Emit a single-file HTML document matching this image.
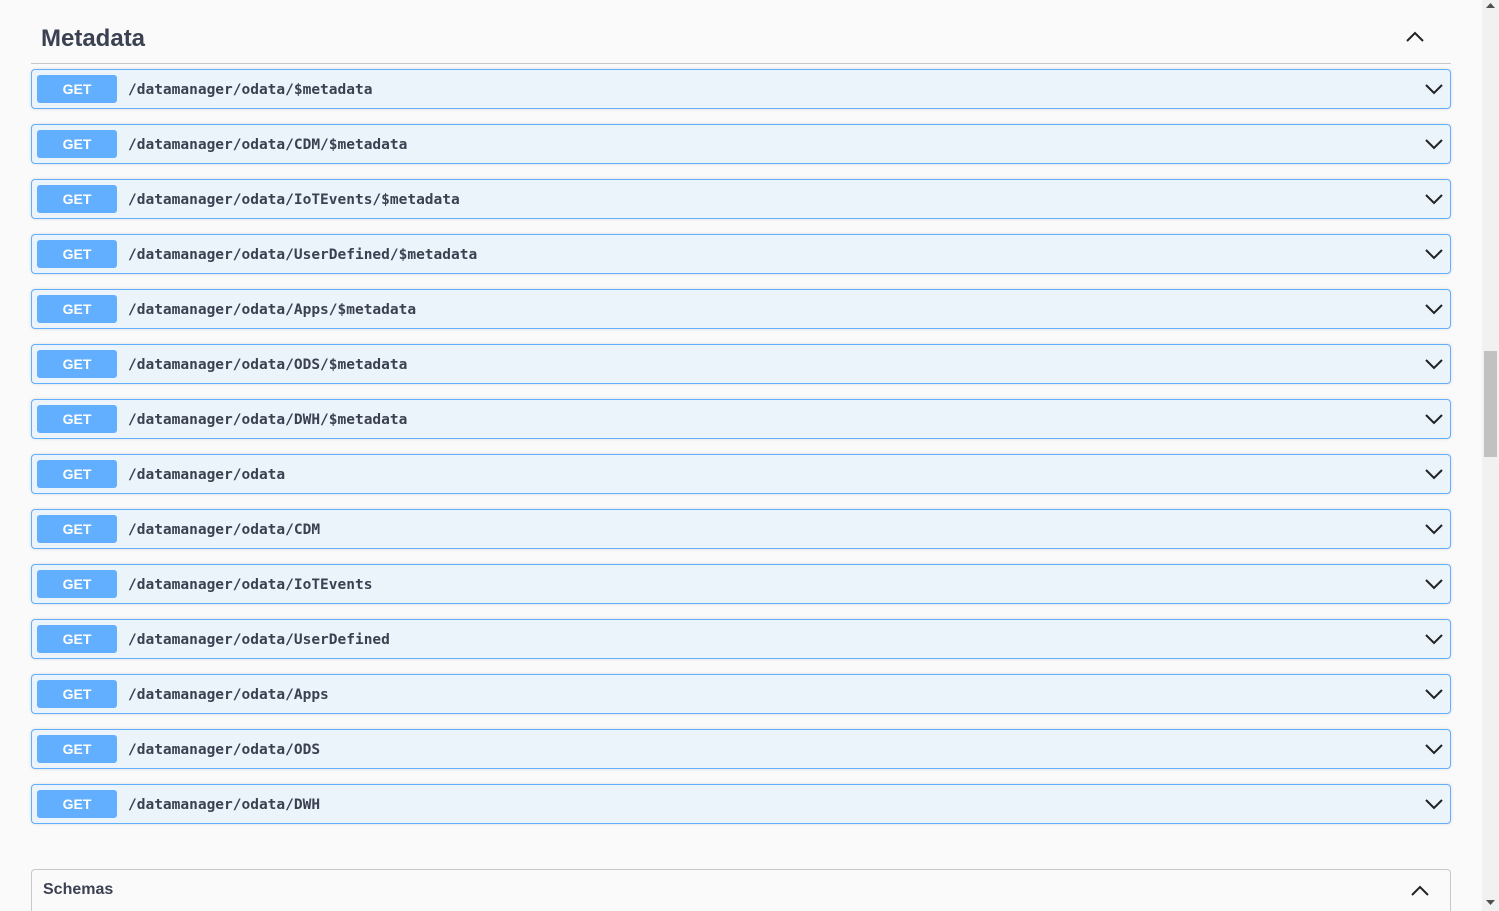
<!DOCTYPE html>
<html><head><style>
*{margin:0;padding:0;box-sizing:border-box}
html,body{width:1499px;height:911px;overflow:hidden}
body{background:#fafafa;font-family:"Liberation Sans",Arial,sans-serif;position:relative}
h2{position:absolute;left:41px;top:25px;font-size:24px;font-weight:bold;color:#3b4151}
.hr{position:absolute;left:31px;width:1420px;top:63px;height:1px;background:#c8c8c8}
.row{position:absolute;left:31px;width:1420px;height:40px;border:1px solid #61affe;border-radius:4px;background:#ebf3fb;box-shadow:0 0 3px rgba(0,0,0,.12)}
.b{position:absolute;left:5px;top:5px;width:80px;height:28px;background:#61affe;border-radius:3px;color:#fff;font-weight:bold;font-size:14px;text-align:center;line-height:28px}
.p{position:absolute;left:96px;top:1px;line-height:38px;font-family:"DejaVu Sans Mono","Liberation Mono",monospace;font-weight:bold;font-size:14.5px;color:#3b4151}
.c{position:absolute;right:6px;top:11px}
.sb{position:absolute;left:1482px;top:0;width:17px;height:911px;background:#f1f1f1}
.th{position:absolute;left:1484px;top:351px;width:13px;height:106px;background:#c1c1c1}
.sc{position:absolute;left:31px;top:869px;width:1420px;height:42px;border:1px solid #c8c8c8;border-bottom:none;border-radius:4px 4px 0 0}
.sc span{position:absolute;left:11px;top:11px;font-size:16px;font-weight:bold;color:#3b4151}
</style></head><body>
<h2>Metadata</h2>
<svg style="position:absolute;left:1405px;top:29px" width="20" height="14"><path d="M2 12 L10 4 L18 12" fill="none" stroke="#222" stroke-width="2"/></svg>
<div class="hr"></div>
<div class="row" style="top:69px"><div class="b">GET</div><div class="p">/datamanager/odata/$metadata</div><svg class="c" width="20" height="16"><path d="M2 4 L10 12 L18 4" fill="none" stroke="#222" stroke-width="2"/></svg></div>
<div class="row" style="top:124px"><div class="b">GET</div><div class="p">/datamanager/odata/CDM/$metadata</div><svg class="c" width="20" height="16"><path d="M2 4 L10 12 L18 4" fill="none" stroke="#222" stroke-width="2"/></svg></div>
<div class="row" style="top:179px"><div class="b">GET</div><div class="p">/datamanager/odata/IoTEvents/$metadata</div><svg class="c" width="20" height="16"><path d="M2 4 L10 12 L18 4" fill="none" stroke="#222" stroke-width="2"/></svg></div>
<div class="row" style="top:234px"><div class="b">GET</div><div class="p">/datamanager/odata/UserDefined/$metadata</div><svg class="c" width="20" height="16"><path d="M2 4 L10 12 L18 4" fill="none" stroke="#222" stroke-width="2"/></svg></div>
<div class="row" style="top:289px"><div class="b">GET</div><div class="p">/datamanager/odata/Apps/$metadata</div><svg class="c" width="20" height="16"><path d="M2 4 L10 12 L18 4" fill="none" stroke="#222" stroke-width="2"/></svg></div>
<div class="row" style="top:344px"><div class="b">GET</div><div class="p">/datamanager/odata/ODS/$metadata</div><svg class="c" width="20" height="16"><path d="M2 4 L10 12 L18 4" fill="none" stroke="#222" stroke-width="2"/></svg></div>
<div class="row" style="top:399px"><div class="b">GET</div><div class="p">/datamanager/odata/DWH/$metadata</div><svg class="c" width="20" height="16"><path d="M2 4 L10 12 L18 4" fill="none" stroke="#222" stroke-width="2"/></svg></div>
<div class="row" style="top:454px"><div class="b">GET</div><div class="p">/datamanager/odata</div><svg class="c" width="20" height="16"><path d="M2 4 L10 12 L18 4" fill="none" stroke="#222" stroke-width="2"/></svg></div>
<div class="row" style="top:509px"><div class="b">GET</div><div class="p">/datamanager/odata/CDM</div><svg class="c" width="20" height="16"><path d="M2 4 L10 12 L18 4" fill="none" stroke="#222" stroke-width="2"/></svg></div>
<div class="row" style="top:564px"><div class="b">GET</div><div class="p">/datamanager/odata/IoTEvents</div><svg class="c" width="20" height="16"><path d="M2 4 L10 12 L18 4" fill="none" stroke="#222" stroke-width="2"/></svg></div>
<div class="row" style="top:619px"><div class="b">GET</div><div class="p">/datamanager/odata/UserDefined</div><svg class="c" width="20" height="16"><path d="M2 4 L10 12 L18 4" fill="none" stroke="#222" stroke-width="2"/></svg></div>
<div class="row" style="top:674px"><div class="b">GET</div><div class="p">/datamanager/odata/Apps</div><svg class="c" width="20" height="16"><path d="M2 4 L10 12 L18 4" fill="none" stroke="#222" stroke-width="2"/></svg></div>
<div class="row" style="top:729px"><div class="b">GET</div><div class="p">/datamanager/odata/ODS</div><svg class="c" width="20" height="16"><path d="M2 4 L10 12 L18 4" fill="none" stroke="#222" stroke-width="2"/></svg></div>
<div class="row" style="top:784px"><div class="b">GET</div><div class="p">/datamanager/odata/DWH</div><svg class="c" width="20" height="16"><path d="M2 4 L10 12 L18 4" fill="none" stroke="#222" stroke-width="2"/></svg></div>
<div class="sc"><span>Schemas</span><svg style="position:absolute;left:1378px;top:13px" width="20" height="14"><path d="M2 12 L10 4 L18 12" fill="none" stroke="#222" stroke-width="2"/></svg></div>
<div class="sb"></div><div class="th"></div>
<svg style="position:absolute;left:1486px;top:3px" width="9" height="6"><path d="M0 5 L4.5 0 L9 5Z" fill="#505050"/></svg>
<svg style="position:absolute;left:1486px;top:900px" width="9" height="6"><path d="M0 0 L4.5 5 L9 0Z" fill="#505050"/></svg>
</body></html>
